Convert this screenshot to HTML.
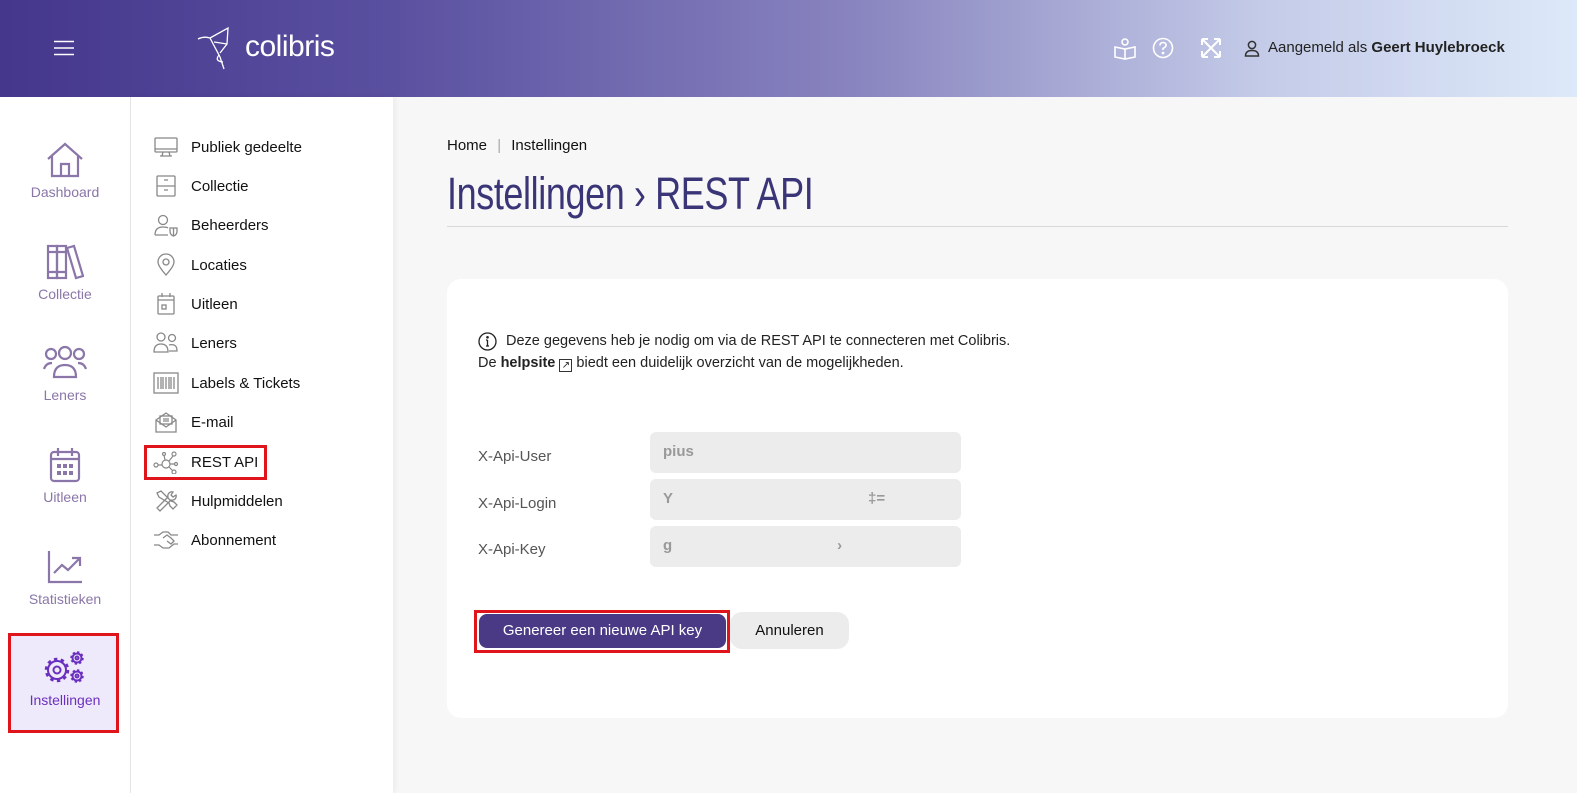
<!DOCTYPE html>
<html><head><meta charset="utf-8"><style>
*{box-sizing:border-box;margin:0;padding:0}
body{width:1577px;height:793px;overflow:hidden;font-family:"Liberation Sans",sans-serif;background:#f7f7f7;position:relative;color:#222}
.hdr{position:absolute;left:0;top:0;width:1577px;height:97px;background:linear-gradient(90deg,#44378c 0%,#5a50a0 25%,#8a86c0 55%,#c4cbe8 80%,#dde9f9 100%)}
.rail{position:absolute;left:0;top:97px;width:131px;height:696px;background:#fff;border-right:1px solid #e6e6e6}
.sub{position:absolute;left:131px;top:97px;width:262px;height:696px;background:#fff;box-shadow:2px 0 6px rgba(0,0,0,.06)}
.ri{position:absolute;left:0;width:130px;text-align:center;font-size:14px;color:#8a76a8}
.ri svg{display:block;margin:0 auto 6px}
.si{position:absolute;left:22px;height:24px;display:flex;align-items:center;font-size:15px;color:#111}
.si svg{width:26px;height:24px;margin-right:12px}
.lbl{position:absolute;left:478px;font-size:15px;color:#555}
.inp{position:absolute;left:650px;width:311px;height:41px;background:#ececec;border-radius:6px;color:#999;font-weight:bold;font-size:15px;padding:11px 13px}
</style></head><body>
<div class="hdr">
<svg style="position:absolute;left:54px;top:40px" width="20" height="16"><path d="M0 1.5H20M0 8H20M0 14.5H20" stroke="#fff" stroke-width="1.6"/></svg>
<svg style="position:absolute;left:196px;top:25px" width="44" height="45" fill="none" stroke="#fff" stroke-width="1.3"><path d="M2 14 Q8 11 14 13 L24 32 L28 44 M14 13 L32 3 L31 19 L24 28 M14 13 L23 30 Q18 36 27 37 M18 17 L31 19"/></svg>
<div style="position:absolute;left:245px;top:30px;color:#fff;font-size:30px;letter-spacing:-.5px">colibris</div>
<svg style="position:absolute;left:1113px;top:38px" width="24" height="22" fill="none" stroke="#fff" stroke-width="1.6"><circle cx="12" cy="4" r="3"/><path d="M2 9 L12 11 L22 9 V19 L12 21 L2 19Z M12 11V21"/></svg>
<svg style="position:absolute;left:1152px;top:37px" width="22" height="22" fill="none" stroke="#fff" stroke-width="1.6"><circle cx="11" cy="11" r="9.5"/><path d="M8 8.5 Q8 5.5 11 5.5 Q14 5.5 14 8.3 Q14 10 11 11.5 V13"/><circle cx="11" cy="16" r=".6" fill="#fff"/></svg>
<svg style="position:absolute;left:1200px;top:37px" width="22" height="22" fill="none" stroke="#fff" stroke-width="2"><path d="M2 2L20 20M20 2L2 20M2 2h6M2 2v6M20 2h-6M20 2v6M2 20h6M2 20v-6M20 20h-6M20 20v-6"/></svg>
<svg style="position:absolute;left:1244px;top:40px" width="16" height="17" fill="none" stroke="#333" stroke-width="1.5"><circle cx="8" cy="5" r="3.6"/><path d="M1.5 16 Q1.5 10.5 8 10.5 Q14.5 10.5 14.5 16Z"/></svg>
<div style="position:absolute;left:1268px;top:39px;font-size:15px;color:#222">Aangemeld als <b>Geert Huylebroeck</b></div>
</div>

<div class="rail">
<div class="ri" style="top:45px"><svg width="38" height="36" fill="none" stroke="#8a76a8" stroke-width="2.2"><path d="M2 17 L19 2 L36 17 M6 14 V34 H32 V14 M15 34 V22 H23 V34"/></svg>Dashboard</div>
<div class="ri" style="top:147px"><svg width="38" height="36" fill="none" stroke="#8a76a8" stroke-width="2.2"><rect x="2" y="2" width="9" height="32"/><rect x="11" y="2" width="9" height="32"/><path d="M2 8h18M2 28h18M21 4 L28 2 L37 32 L30 34Z"/></svg>Collectie</div>
<div class="ri" style="top:248px"><svg width="44" height="36" fill="none" stroke="#8a76a8" stroke-width="2.2"><circle cx="8" cy="9" r="5"/><circle cx="22" cy="8" r="6"/><circle cx="36" cy="9" r="5"/><path d="M1 24 Q3 18 9 18 M43 24 Q41 18 35 18 M11 32 Q11 20 22 20 Q33 20 33 32Z"/></svg>Leners</div>
<div class="ri" style="top:350px"><svg width="38" height="36" fill="none" stroke="#8a76a8" stroke-width="2.2"><rect x="5" y="5" width="28" height="29" rx="3"/><path d="M5 12h28M12 1v8M26 1v8"/><g fill="#8a76a8" stroke="none"><rect x="11" y="17" width="4" height="4"/><rect x="17" y="17" width="4" height="4"/><rect x="23" y="17" width="4" height="4"/><rect x="11" y="24" width="4" height="4"/><rect x="17" y="24" width="4" height="4"/><rect x="23" y="24" width="4" height="4"/></g></svg>Uitleen</div>
<div class="ri" style="top:452px"><svg width="38" height="36" fill="none" stroke="#8a76a8" stroke-width="2.2"><path d="M3 2V33H36M8 24 L16 16 L22 21 L33 10 M26 9 H34 V17"/></svg>Statistieken</div>
<div style="position:absolute;left:8px;top:536px;width:111px;height:100px;border:3px solid #e0151b;background:#efeafb"></div>
<div class="ri" style="top:553px;color:#6b2fbf"><svg width="44" height="36" fill="none" stroke="#6b2fbf" stroke-width="2"><circle cx="14" cy="20" r="9"/><circle cx="14" cy="20" r="10.5" stroke-width="3.5" stroke-dasharray="3.3 3.3"/><circle cx="14" cy="20" r="3.5"/><circle cx="34" cy="8" r="4.5"/><circle cx="34" cy="8" r="5.5" stroke-width="2.5" stroke-dasharray="2.2 2.1"/><circle cx="34" cy="26" r="4.5"/><circle cx="34" cy="26" r="5.5" stroke-width="2.5" stroke-dasharray="2.2 2.1"/><circle cx="34" cy="8" r="1.5"/><circle cx="34" cy="26" r="1.5"/></svg>Instellingen</div>
</div>

<div class="sub">
<div class="si" style="top:38px"><svg fill="none" stroke="#888" stroke-width="1.3"><rect x="2" y="3" width="22" height="14" rx="1"/><path d="M2 14h22M10 17l-1 4h8l-1-4M7 21h12"/></svg>Publiek gedeelte</div>
<div class="si" style="top:77px"><svg fill="none" stroke="#888" stroke-width="1.3"><rect x="4" y="2" width="18" height="20" rx="1"/><path d="M4 12h18M11 6h4M11 16h4"/></svg>Collectie</div>
<div class="si" style="top:116px"><svg fill="none" stroke="#888" stroke-width="1.3"><circle cx="10" cy="7" r="4.5"/><path d="M2 22 Q2 14 10 14 Q14 14 15 15 M2 22h13M17 15h7v3q0 4-3.5 5q-3.5-1-3.5-5zM20.5 15v8"/></svg>Beheerders</div>
<div class="si" style="top:156px"><svg fill="none" stroke="#888" stroke-width="1.3"><path d="M13 22 Q5 13 5 9 A8 8 0 0 1 21 9 Q21 13 13 22Z"/><circle cx="13" cy="9" r="3"/></svg>Locaties</div>
<div class="si" style="top:195px"><svg fill="none" stroke="#888" stroke-width="1.3"><rect x="5" y="4" width="16" height="18" rx="1"/><path d="M5 8h16M9 1v4M17 1v4"/><rect x="9" y="13" width="4" height="4"/></svg>Uitleen</div>
<div class="si" style="top:234px"><svg fill="none" stroke="#888" stroke-width="1.3"><circle cx="8" cy="6" r="4"/><circle cx="19" cy="7" r="3.5"/><path d="M1 21 Q1 13 8 13 Q15 13 15 21Z M16 14 Q24 12 24 20 H16"/></svg>Leners</div>
<div class="si" style="top:274px"><svg fill="none" stroke="#888" stroke-width="1.3"><rect x="1" y="2" width="24" height="20"/><path d="M5 6v12M8 6v12M10 6v12M13 6v12M16 6v12M18 6v12M21 6v12"/></svg>Labels &amp; Tickets</div>
<div class="si" style="top:313px"><svg fill="none" stroke="#888" stroke-width="1.3"><path d="M3 10 L13 3 L23 10 V22 H3Z M3 10 L13 17 L23 10"/><rect x="7" y="6" width="12" height="8"/><path d="M10 9h6M10 11h6"/></svg>E-mail</div>
<div style="position:absolute;left:13px;top:348px;width:123px;height:35px;border:3px solid #e0151b"></div>
<div class="si" style="top:353px"><svg fill="none" stroke="#888" stroke-width="1.2"><circle cx="3" cy="15" r="2"/><circle cx="13" cy="14" r="4"/><circle cx="21" cy="4" r="2"/><circle cx="23" cy="14" r="1.5"/><circle cx="21" cy="22" r="2"/><circle cx="11" cy="4" r="1.5"/><path d="M5 15h4M16 11l4-5M17 14h5M16 17l4 4M12 10l-1-5"/></svg>REST API</div>
<div class="si" style="top:392px"><svg fill="none" stroke="#888" stroke-width="1.3"><path d="M4 4l4-2 10 10 3 1 3 3-4 4-3-3-1-3L6 8Z M20 3a4 4 0 0 0-5 5L4 19l3 3 11-11a4 4 0 0 0 5-5l-3 2-2-2z"/></svg>Hulpmiddelen</div>
<div class="si" style="top:431px"><svg fill="none" stroke="#888" stroke-width="1.3"><path d="M1 7h5l4-3h5l3 3h7M1 17h5l4 3h6l5-4h4M10 10l4-3 4 3 3 3-3 3-4-3"/></svg>Abonnement</div>
</div>

<div style="position:absolute;left:447px;top:137px;font-size:15px;color:#111">Home <span style="color:#aaa;margin:0 6px">|</span> Instellingen</div>
<div style="position:absolute;left:447px;top:168px;font-size:45px;color:#3a3577;transform:scaleX(.8);transform-origin:left;white-space:nowrap;letter-spacing:-.5px">Instellingen › REST API</div>
<div style="position:absolute;left:447px;top:226px;width:1061px;height:1px;background:#d8d8d8"></div>

<div style="position:absolute;left:447px;top:279px;width:1061px;height:439px;background:#fff;border-radius:14px"></div>
<svg style="position:absolute;left:478px;top:332px" width="19" height="19" fill="none" stroke="#222" stroke-width="1.3"><circle cx="9.5" cy="9.5" r="8.5"/><path d="M9.5 8v6M8 14h3M8 8h1.5"/><circle cx="9.5" cy="5.3" r=".7" fill="#222"/></svg>
<div style="position:absolute;left:506px;top:333px;font-size:14.5px;color:#222">Deze gegevens heb je nodig om via de REST API te connecteren met Colibris.</div>
<div style="position:absolute;left:478px;top:355px;font-size:14.5px;color:#222">De <b>helpsite</b> <span style="display:inline-block;width:13px;height:13px;border:1px solid #333;font-size:10px;line-height:11px;text-align:center;vertical-align:-1px">↗</span> biedt een duidelijk overzicht van de mogelijkheden.</div>

<div class="lbl" style="top:448px">X-Api-User</div>
<div class="lbl" style="top:495px">X-Api-Login</div>
<div class="lbl" style="top:541px">X-Api-Key</div>
<div class="inp" style="top:432px">pius</div>
<div class="inp" style="top:479px">Y<span style="margin-left:195px">‡=</span></div>
<div class="inp" style="top:526px">g<span style="margin-left:165px">›</span></div>

<div style="position:absolute;left:474px;top:610px;width:256px;height:43px;border:3px solid #e0151b"></div>
<div style="position:absolute;left:479px;top:614px;width:247px;height:34px;background:#4a3a85;border-radius:8px;color:#fff;font-size:15px;text-align:center;line-height:34px">Genereer een nieuwe API key</div>
<div style="position:absolute;left:730px;top:612px;width:119px;height:37px;background:#ececec;border-radius:12px;color:#111;font-size:15px;text-align:center;line-height:37px">Annuleren</div>
</body></html>
